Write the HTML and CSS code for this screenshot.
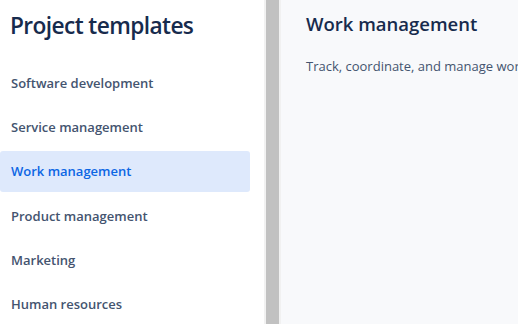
FILE: index.html
```html
<!DOCTYPE html>
<html>
<head>
<meta charset="utf-8">
<link rel="stylesheet" href="styles.css">
</head>
<body>
<div class="app">
  <aside class="sidebar">
    <h1 class="title">Project templates</h1>
    <nav class="menu">
      <a class="item">Software development</a>
      <a class="item">Service management</a>
      <a class="item active">Work management</a>
      <a class="item">Product management</a>
      <a class="item">Marketing</a>
      <a class="item">Human resources</a>
    </nav>
  </aside>
  <div class="scrollbar"><div class="thumb"></div></div>
  <main class="content">
    <h2 class="heading">Work management</h2>
    <p class="desc">Track, coordinate, and manage work across teams and projects.</p>
  </main>
</div>
</body>
</html>
```
FILE: styles.css
```css
* { box-sizing: border-box; }
html, body { margin: 0; height: 100%; overflow: hidden; }
body {
  font-family: "Open Sans", "Noto Sans", sans-serif;
  background: #fff;
}
.app {
  display: flex;
  height: 324px;
}
.sidebar {
  width: 264px;
  flex: none;
  padding: 0 14px 0 0;
  background: #fff;
}
.title {
  margin: 0;
  padding: 10px 0 0 10px;
  font-size: 22.7px;
  font-weight: 600;
  line-height: 32px;
  color: #172b4d;
  letter-spacing: -0.6px;
}
.menu {
  display: flex;
  flex-direction: column;
  gap: 3.2px;
  margin-top: 21px;
}
.item {
  display: block;
  height: 41px;
  line-height: 41px;
  padding-left: 11px;
  font-size: 13px;
  font-weight: 600;
  color: #44546f;
  border-radius: 3px;
  white-space: nowrap;
}
.item.active {
  background: #dee9fc;
  color: #0c66e4;
}
.scrollbar {
  width: 17px;
  flex: none;
  background: #f1f1f1;
  padding: 0 2px;
}
.thumb {
  height: 100%;
  background: #c1c1c1;
}
.content {
  flex: 1;
  background: #f8f9fb;
  padding: 12px 0 0 25px;
  overflow: hidden;
  white-space: nowrap;
}
.heading {
  margin: 0;
  font-size: 18.5px;
  font-weight: 600;
  line-height: 24px;
  color: #172b4d;
}
.desc {
  margin: 20px 0 0;
  font-size: 13px;
  line-height: 20px;
  color: #44546f;
}
```
